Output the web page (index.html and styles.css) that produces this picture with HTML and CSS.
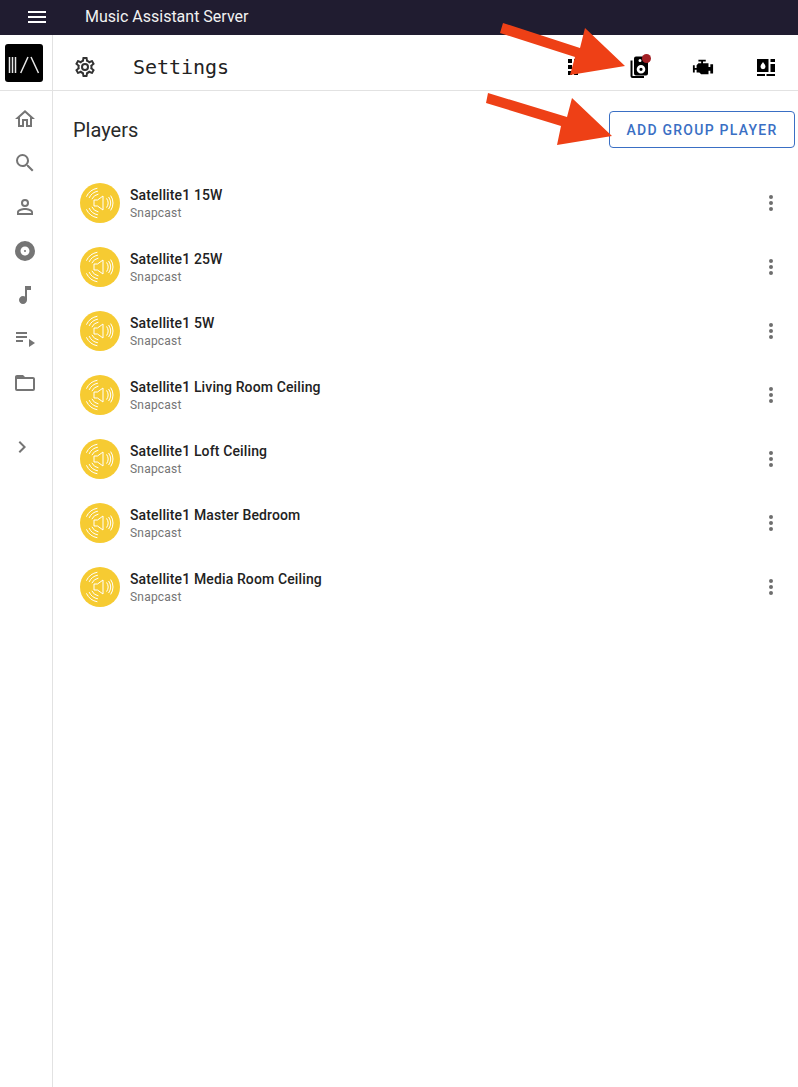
FILE: index.html
```html
<!DOCTYPE html>
<html lang="en">
<head>
<meta charset="utf-8">
<title>Music Assistant Server</title>
<link rel="stylesheet" href="styles.css">
</head>
<body>
<svg width="0" height="0" class="defs">
  <symbol id="avatar" viewBox="0 0 40 40">
    <path class="av-line" d="M14 17h3.500l5.500-4v14l-5.500-4H14z"/>
    <path class="av-line" d="M26.550 15.400a8 8 0 0 1 0 9.200M28.600 14a10.500 10.500 0 0 1 0 12M30.650 12.550a13 13 0 0 1 0 14.900"/>
    <path class="av-line" d="M11.840 16.200a9 9 0 0 1 6.600-5.060M9.120 14.930a12 12 0 0 1 8.800-6.750M6.410 13.660a15 15 0 0 1 10.990-8.430"/>
    <path class="av-line" d="M11.840 23.800a9 9 0 0 0 6.600 5.060M9.120 25.070a12 12 0 0 0 8.800 6.750M6.410 26.340a15 15 0 0 0 10.990 8.430"/>
  </symbol>
  <symbol id="dots" viewBox="0 0 24 24"><path d="M12,16A2,2 0 0,1 14,18A2,2 0 0,1 12,20A2,2 0 0,1 10,18A2,2 0 0,1 12,16M12,10A2,2 0 0,1 14,12A2,2 0 0,1 12,14A2,2 0 0,1 10,12A2,2 0 0,1 12,10M12,4A2,2 0 0,1 14,6A2,2 0 0,1 12,8A2,2 0 0,1 10,6A2,2 0 0,1 12,4Z"/></symbol>
</svg>

<header class="appbar">
  <svg class="appbar-menu" viewBox="0 0 24 24"><path d="M3,6H21V8H3V6M3,11H21V13H3V11M3,16H21V18H3V16Z"/></svg>
  <span class="appbar-title">Music Assistant Server</span>
</header>

<div class="shell">
  <nav class="rail">
    <div class="rail-logo-row">
      <svg class="logo" viewBox="0 0 38 38">
        <rect width="38" height="38" rx="3" fill="#000"/>
        <path d="M4.500 13v16M7.500 13v16M10.500 13v16M15.700 29l7.300-16M26 13l7.500 16" fill="none" stroke="#e8e8e8" stroke-width="1.500"/>
      </svg>
    </div>
    <div class="rail-items">
      <svg class="rail-icon" viewBox="0 0 24 24"><path d="M12 5.690L17 10.190V18H15V12H9V18H7V10.190L12 5.690M12 3L2 12H5V20H11V14H13V20H19V12H22Z"/></svg>
      <svg class="rail-icon" viewBox="0 0 24 24"><path d="M9.500,3A6.500,6.500 0 0,1 16,9.500C16,11.110 15.410,12.590 14.440,13.730L14.710,14H15.500L20.500,19L19,20.500L14,15.500V14.710L13.730,14.440C12.590,15.410 11.110,16 9.500,16A6.500,6.500 0 0,1 3,9.500A6.500,6.500 0 0,1 9.500,3M9.500,5C7,5 5,7 5,9.500C5,12 7,14 9.500,14C12,14 14,12 14,9.500C14,7 12,5 9.500,5Z"/></svg>
      <svg class="rail-icon" viewBox="0 0 24 24"><path d="M12,4A4,4 0 0,1 16,8A4,4 0 0,1 12,12A4,4 0 0,1 8,8A4,4 0 0,1 12,4M12,6A2,2 0 0,0 10,8A2,2 0 0,0 12,10A2,2 0 0,0 14,8A2,2 0 0,0 12,6M12,13C14.670,13 20,14.330 20,17V20H4V17C4,14.330 9.330,13 12,13M12,14.900C9.030,14.900 5.900,16.360 5.900,17V18.100H18.100V17C18.100,16.360 14.970,14.900 12,14.900Z"/></svg>
      <svg class="rail-icon" viewBox="0 0 24 24"><path d="M12,11A1,1 0 0,0 11,12A1,1 0 0,0 12,13A1,1 0 0,0 13,12A1,1 0 0,0 12,11M12,16.500C9.500,16.500 7.500,14.500 7.500,12C7.500,9.500 9.500,7.500 12,7.500C14.500,7.500 16.500,9.500 16.500,12C16.500,14.500 14.500,16.500 12,16.500M12,2A10,10 0 0,0 2,12A10,10 0 0,0 12,22A10,10 0 0,0 22,12A10,10 0 0,0 12,2Z"/></svg>
      <svg class="rail-icon" viewBox="0 0 24 24"><path d="M12 3V13.550C11.410 13.210 10.730 13 10 13C7.790 13 6 14.790 6 17S7.790 21 10 21 14 19.210 14 17V7H18V3H12Z"/></svg>
      <svg class="rail-icon" viewBox="0 0 24 24"><path d="M3 10H14V12H3V10M3 6H14V8H3V6M3 14H10V16H3V14M16 13V21L22 17L16 13Z" transform="translate(0 -1)"/></svg>
      <svg class="rail-icon" viewBox="0 0 24 24"><path d="M20,18H4V8H20M20,6H12L10,4H4C2.890,4 2,4.890 2,6V18A2,2 0 0,0 4,20H20A2,2 0 0,0 22,18V8C22,6.890 21.100,6 20,6Z"/></svg>
      <svg class="rail-icon rail-chevron" viewBox="0 0 24 24"><path d="M8.590,16.580L13.170,12L8.590,7.410L10,6L16,12L10,18L8.590,16.580Z"/></svg>
    </div>
  </nav>

  <main class="main">
    <div class="toolbar">
      <svg class="toolbar-cog" viewBox="0 0 24 24"><path d="M12,8A4,4 0 0,1 16,12A4,4 0 0,1 12,16A4,4 0 0,1 8,12A4,4 0 0,1 12,8M12,10A2,2 0 0,0 10,12A2,2 0 0,0 12,14A2,2 0 0,0 14,12A2,2 0 0,0 12,10M10,22C9.750,22 9.540,21.820 9.500,21.580L9.130,18.930C8.500,18.680 7.960,18.340 7.440,17.940L4.950,18.950C4.730,19.030 4.460,18.950 4.340,18.730L2.340,15.270C2.210,15.050 2.270,14.780 2.460,14.630L4.570,12.970L4.500,12L4.570,11L2.460,9.370C2.270,9.220 2.210,8.950 2.340,8.730L4.340,5.270C4.460,5.050 4.730,4.960 4.950,5.050L7.440,6.050C7.960,5.660 8.500,5.320 9.130,5.070L9.500,2.420C9.540,2.180 9.750,2 10,2H14C14.250,2 14.460,2.180 14.500,2.420L14.870,5.070C15.500,5.320 16.040,5.660 16.560,6.050L19.050,5.050C19.270,4.960 19.540,5.050 19.660,5.270L21.660,8.730C21.790,8.950 21.730,9.220 21.540,9.370L19.430,11L19.500,12L19.430,13L21.540,14.630C21.730,14.780 21.790,15.050 21.660,15.270L19.660,18.730C19.540,18.950 19.270,19.040 19.050,18.950L16.560,17.950C16.040,18.340 15.500,18.680 14.870,18.930L14.500,21.580C14.460,21.820 14.250,22 14,22H10M11.250,4L10.880,6.610C9.680,6.860 8.620,7.500 7.850,8.390L5.440,7.350L4.690,8.650L6.800,10.200C6.400,11.370 6.400,12.640 6.800,13.800L4.680,15.360L5.430,16.660L7.860,15.620C8.630,16.500 9.680,17.140 10.870,17.380L11.240,20H12.760L13.130,17.390C14.320,17.140 15.370,16.500 16.140,15.620L18.570,16.660L19.320,15.360L17.200,13.810C17.600,12.640 17.600,11.370 17.200,10.200L19.310,8.650L18.560,7.350L16.150,8.390C15.380,7.500 14.320,6.860 13.120,6.620L12.750,4H11.250Z"/></svg>
      <h1 class="toolbar-title">Settings</h1>
      <div class="tabs">
        <div class="tab">
          <svg class="tab-icon" viewBox="0 0 24 24"><path d="M4 4h4v4H4zM10 4h4v4h-4zM4 10h4v4H4zM10 10h4v4h-4zM4 16h4v4H4zM10 16h4v4h-4z"/></svg>
        </div>
        <div class="tab">
          <span class="tab-speaker">
            <svg class="tab-icon" viewBox="0 0 24 24"><path fill-rule="evenodd" d="M9 1.500h10a2 2 0 0 1 2 2v15a2 2 0 0 1-2 2H9a2 2 0 0 1-2-2v-15a2 2 0 0 1 2-2zm4 2.500a1.500 1.500 0 1 0 0 3 1.500 1.500 0 0 0 0-3zM14 10a4.300 4.300 0 1 0 0 8.600 4.300 4.300 0 0 0 0-8.600zm0 2.700a1.600 1.600 0 1 1 0 3.200 1.600 1.600 0 0 1 0-3.200z"/><path d="M3.500 5.500H5.500V21H17V23H5.500a2 2 0 0 1-2-2z"/></svg>
            <span class="badge"></span>
          </span>
        </div>
        <div class="tab">
          <svg class="tab-icon tab-icon-engine" viewBox="0 0 24 24"><path d="M7,4V6H10V8H7L5,10V13H3V10H1V18H3V15H5V18H8L10,20H18V16H20V19H23V9H20V12H18V8H12V6H15V4H7Z"/></svg>
        </div>
        <div class="tab">
          <svg class="tab-icon" viewBox="0 0 24 24"><path fill-rule="evenodd" d="M3 4h11.500v13H3zM9 7C8 8.500 6.500 10 6.500 11.700a2.500 2.500 0 0 0 5 0C11.500 10 10 8.500 9 7z"/><path d="M16.500 4H21v3h-4.500zM16.500 9H21v8h-4.500zM3 19h8v2H3zM12.500 19H21v2h-8.500z"/></svg>
        </div>
      </div>
    </div>

    <section class="content">
      <div class="section-head">
        <h2 class="section-title">Players</h2>
        <button class="add-btn">ADD GROUP PLAYER</button>
      </div>
      <ul class="players">
        <li class="player"><svg class="avatar"><use href="#avatar"/></svg><div class="player-text"><div class="player-name">Satellite1 15W</div><div class="player-sub">Snapcast</div></div><svg class="player-dots"><use href="#dots"/></svg></li>
        <li class="player"><svg class="avatar"><use href="#avatar"/></svg><div class="player-text"><div class="player-name">Satellite1 25W</div><div class="player-sub">Snapcast</div></div><svg class="player-dots"><use href="#dots"/></svg></li>
        <li class="player"><svg class="avatar"><use href="#avatar"/></svg><div class="player-text"><div class="player-name">Satellite1 5W</div><div class="player-sub">Snapcast</div></div><svg class="player-dots"><use href="#dots"/></svg></li>
        <li class="player"><svg class="avatar"><use href="#avatar"/></svg><div class="player-text"><div class="player-name">Satellite1 Living Room Ceiling</div><div class="player-sub">Snapcast</div></div><svg class="player-dots"><use href="#dots"/></svg></li>
        <li class="player"><svg class="avatar"><use href="#avatar"/></svg><div class="player-text"><div class="player-name">Satellite1 Loft Ceiling</div><div class="player-sub">Snapcast</div></div><svg class="player-dots"><use href="#dots"/></svg></li>
        <li class="player"><svg class="avatar"><use href="#avatar"/></svg><div class="player-text"><div class="player-name">Satellite1 Master Bedroom</div><div class="player-sub">Snapcast</div></div><svg class="player-dots"><use href="#dots"/></svg></li>
        <li class="player"><svg class="avatar"><use href="#avatar"/></svg><div class="player-text"><div class="player-name">Satellite1 Media Room Ceiling</div><div class="player-sub">Snapcast</div></div><svg class="player-dots"><use href="#dots"/></svg></li>
      </ul>
    </section>
  </main>
</div>

<svg class="arrows" viewBox="0 0 798 1087">
  <polygon points="503,23 580,48 585,28 625,66 570,75 575,57 500,33"/>
  <polygon points="488,93 567,117 572,98 612,136 557,145 561,126 486,103"/>
</svg>
</body>
</html>
```

FILE: styles.css
```css
* { box-sizing: border-box; }
html, body { margin: 0; padding: 0; height: 100%; }
body {
  font-family: Roboto, "Liberation Sans", sans-serif;
  background: #fff;
  color: #1c1c1c;
  overflow: hidden;
  display: flex;
  flex-direction: column;
  height: 1087px;
}
.defs { position: absolute; }
.appbar {
  height: 35px;
  flex: none;
  background: #201c30;
  color: #fff;
  display: flex;
  align-items: center;
}
.appbar-menu {
  width: 24px;
  height: 24px;
  fill: #fff;
  margin-left: 25px;
  margin-top: -1px;
}
.appbar-title {
  margin-left: 36px;
  font-size: 16px;
  margin-top: -2px;
  color: #f2f2f2;
}
.shell { flex: 1; display: flex; min-height: 0; }
.rail {
  width: 53px;
  flex: none;
  border-right: 1px solid #e2e2e2;
  display: flex;
  flex-direction: column;
}
.rail-logo-row {
  height: 56px;
  border-bottom: 1px solid #e2e2e2;
  padding: 9px 0 0 5px;
}
.logo { display: block; width: 38px; height: 38px; }
.rail-items {
  display: flex;
  flex-direction: column;
  gap: 20px;
  padding: 16px 0 0 13px;
}
.rail-icon { display: block; width: 24px; height: 24px; fill: #757575; }
.rail-chevron { margin-top: 20px; margin-left: -3px; }
.main { flex: 1; min-width: 0; display: flex; flex-direction: column; }
.toolbar {
  height: 56px;
  flex: none;
  border-bottom: 1px solid #e2e2e2;
  display: flex;
  align-items: center;
  padding: 8px 0 0 20px;
}
.toolbar-cog { width: 24px; height: 24px; fill: #333; flex: none; }
.toolbar-title {
  margin: 0 0 0 36px;
  font-family: "DejaVu Sans Mono", "Liberation Mono", monospace;
  font-size: 20px;
  font-weight: 400;
  letter-spacing: -0.05px;
  color: #222;
}
.tabs { margin-left: auto; display: flex; }
.tab {
  width: 63.500px;
  display: flex;
  align-items: center;
  justify-content: center;
}
.tab-icon { display: block; width: 24px; height: 24px; fill: #000; }
.tab-icon-engine { width: 22px; height: 22px; }
.tab-speaker { position: relative; display: block; }
.badge {
  position: absolute;
  top: -1px;
  right: 0;
  width: 9px;
  height: 9px;
  border-radius: 50%;
  background: #a31f24;
}
.content { flex: 1; padding: 20px 3px 0 20px; }
.section-head {
  display: flex;
  justify-content: space-between;
  align-items: center;
  height: 37px;
}
.section-title { margin: 0; font-size: 20px; font-weight: 400; color: #2a2a2a; }
.add-btn {
  width: 186px;
  height: 37px;
  padding: 1px 0 0;
  background: #fff;
  border: 1px solid #3a6fc4;
  border-radius: 4px;
  color: #3a6fc4;
  font-family: inherit;
  font-size: 14px;
  font-weight: 500;
  letter-spacing: 1.25px;
}
.players { list-style: none; margin: 23px 0 0; padding: 0; }
.player {
  height: 64px;
  display: flex;
  align-items: center;
  padding-left: 7px;
}
.avatar { width: 40px; height: 40px; flex: none; border-radius: 50%; background: #f6cb32; }
.av-line { fill: none; stroke: #fff; stroke-width: 1; }
.player-text { margin-left: 10px; padding-top: 2px; flex: 1; min-width: 0; }
.player-name { font-size: 14px; font-weight: 500; line-height: 18px; letter-spacing: 0.13px; color: #222; }
.player-sub { font-size: 12px; line-height: 18px; letter-spacing: 0.2px; color: #757575; }
.player-dots { width: 24px; height: 24px; fill: #6e6e6e; flex: none; margin-right: 12px; }
.arrows {
  position: absolute;
  left: 0;
  top: 0;
  width: 798px;
  height: 1087px;
  fill: #ee4016;
  pointer-events: none;
}
```
